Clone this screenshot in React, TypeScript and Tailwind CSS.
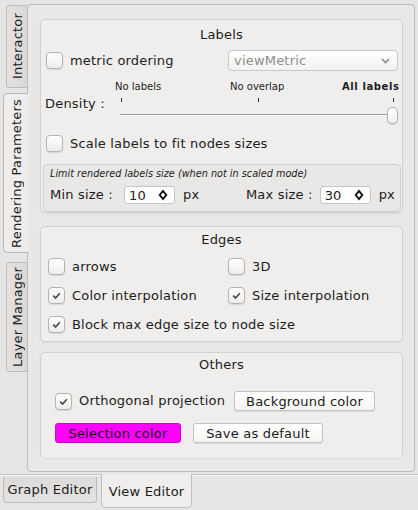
function Check({ on }: { on?: boolean }) {
  return (
    <span className="flex h-[17px] w-[17px] shrink-0 items-center justify-center rounded-[4px] border border-[#b4b3b2] bg-linear-to-b from-white to-[#eeedec] shadow-[0_1px_1px_rgba(0,0,0,0.1)]">
      {on && (
        <svg width="11" height="11" viewBox="0 0 11 11">
          <path d="M2.2 5.6 L4.6 8 L8.8 3.2" stroke="#4b4b4b" strokeWidth="1.7" fill="none" />
        </svg>
      )}
    </span>
  );
}

function SpinArrows() {
  return (
    <svg width="10" height="12" viewBox="0 0 10 12">
      <path d="M5 0.5 L9.5 6 L5 11.5 L0.5 6 Z" fill="#111" />
      <path d="M5 3.6 L7.2 6 L5 8.4 L2.8 6 Z" fill="#fff" />
    </svg>
  );
}

function Spin({ value }: { value: string }) {
  return (
    <div className="flex h-[18px] w-[51px] items-center justify-between rounded-[3px] border border-[#c6c5c4] bg-white pl-[4px] pr-[6px] text-[13px] leading-none">
      <span>{value}</span>
      <SpinArrows />
    </div>
  );
}

function SideTab({
  label,
  active,
  className,
}: {
  label: string;
  active?: boolean;
  className: string;
}) {
  return (
    <div
      className={
        active
          ? "relative z-10 -mr-[1px] flex items-center justify-center rounded-l-[5px] border border-r-0 border-[#b9b8b7] bg-[#eeedec] " +
            className
          : "flex items-center justify-center rounded-l-[4px] border border-r-0 border-[#bebdbc] bg-linear-to-r from-[#e4e3e2] to-[#d9d8d7] " +
            className
      }
    >
      <span className="rotate-180 whitespace-nowrap text-[13px] leading-none [writing-mode:vertical-rl]">
        {label}
      </span>
    </div>
  );
}

function Group({ className, children }: { className: string; children: React.ReactNode }) {
  return (
    <div
      className={
        "w-[363px] rounded-[5px] border border-[#d2d1d0] bg-[#efeeed] shadow-[0_1px_2px_rgba(0,0,0,0.06)] " +
        className
      }
    >
      {children}
    </div>
  );
}

export default function App() {
  return (
    <div className="flex h-[510px] w-[418px] flex-col overflow-hidden bg-[#e6e5e4] font-['DejaVu_Sans',sans-serif] text-[13px] tracking-[0.2px] text-[#1c1c1c]">
      <div className="flex pt-[4px]">
        {/* vertical tabs */}
        <div className="flex w-[27px] shrink-0 flex-col items-end">
          <SideTab label="Interactor" className="mt-[1px] h-[83px] w-[21px]" />
          <SideTab label="Rendering Parameters" active className="mt-[5px] h-[160px] w-[25px]" />
          <SideTab label="Layer Manager" className="mt-[9px] h-[110px] w-[21px]" />
        </div>

        <div className="h-[468px] w-[388px] rounded-[4px] border border-[#bdbcbb] bg-[#e9e8e7] pl-[12px] pt-[14px]">
          {/* Labels */}
          <Group className="h-[194px]">
            <div className="pt-[7px] text-center leading-[16px]">Labels</div>
            <div className="mt-[7px] flex h-[21px] items-center">
              <span className="ml-[5px]">
                <Check />
              </span>
              <span className="ml-[7px]">metric ordering</span>
              <div className="ml-auto mr-[4px] flex h-[21px] w-[170px] items-center justify-between rounded-[4px] border border-[#c9c8c7] bg-linear-to-b from-white to-[#f3f2f1] pl-[5px] pr-[7px] text-[#8e8d8c]">
                <span>viewMetric</span>
                <svg width="9" height="6" viewBox="0 0 9 6">
                  <path d="M1 1 L4.5 4.5 L8 1" stroke="#8a8988" strokeWidth="1.6" fill="none" />
                </svg>
              </div>
            </div>

            <div className="mt-[10px] flex pl-[74px] text-[10px] leading-[11px] tracking-normal">
              <span className="w-[115px]">No labels</span>
              <span className="w-[112px]">No overlap</span>
              <span className="font-bold tracking-[0.6px]">All labels</span>
            </div>

            <div className="mt-[4px] flex h-[29px] items-start">
              <span className="ml-[4px] w-[75px] leading-[16px]">Density :</span>
              <div className="relative h-[29px] w-[279px]">
                <span className="absolute left-[1px] top-[2px] h-[4px] w-[1px] bg-[#333]" />
                <span className="absolute left-[138px] top-[2px] h-[4px] w-[1px] bg-[#333]" />
                <span className="absolute left-[273px] top-[2px] h-[4px] w-[1px] bg-[#333]" />
                <span className="absolute left-0 top-[18px] h-[1px] w-[275px] bg-[#9d9c9b]" />
                <span className="absolute left-0 top-[19px] h-[1px] w-[275px] bg-[#fbfbfb]" />
                <span className="absolute left-[267px] top-[11px] h-[17px] w-[11px] rounded-[5px] border border-[#b1b0af] bg-linear-to-b from-white to-[#f0efee] shadow-[0_1px_1px_rgba(0,0,0,0.15)]" />
              </div>
            </div>

            <div className="mt-[10px] flex h-[17px] items-center">
              <span className="ml-[5px]">
                <Check />
              </span>
              <span className="ml-[7px]">Scale labels to fit nodes sizes</span>
            </div>

            <div className="ml-[2px] mt-[12px] h-[48px] w-[358px] rounded-[4px] border border-[#d0cfce] bg-[#e9e8e7] pl-[6px] pr-[5px] pt-[3px]">
              <div className="text-[9.7px] italic leading-[12px] tracking-normal">
                Limit rendered labels size (when not in scaled mode)
              </div>
              <div className="mt-[6px] flex h-[18px] items-center">
                <span className="w-[74px]">Min size :</span>
                <Spin value="10" />
                <span className="ml-[8px]">px</span>
                <span className="ml-auto">Max size :</span>
                <span className="ml-[7px]">
                  <Spin value="30" />
                </span>
                <span className="ml-[8px]">px</span>
              </div>
            </div>
          </Group>

          {/* Edges */}
          <Group className="mt-[13px] h-[116px]">
            <div className="pt-[5px] text-center leading-[16px]">Edges</div>
            <div className="mt-[10px] flex flex-col gap-[12px] pl-[7px]">
              <div className="flex h-[17px] items-center">
                <div className="flex w-[180px] items-center">
                  <Check />
                  <span className="ml-[7px]">arrows</span>
                </div>
                <Check />
                <span className="ml-[7px]">3D</span>
              </div>
              <div className="flex h-[17px] items-center">
                <div className="flex w-[180px] items-center">
                  <Check on />
                  <span className="ml-[7px]">Color interpolation</span>
                </div>
                <Check on />
                <span className="ml-[7px]">Size interpolation</span>
              </div>
              <div className="flex h-[17px] items-center">
                <Check on />
                <span className="ml-[7px]">Block max edge size to node size</span>
              </div>
            </div>
          </Group>

          {/* Others */}
          <Group className="mt-[10px] h-[106px] border-b-[#ebeae9]">
            <div className="pt-[4px] text-center leading-[16px]">Others</div>
            <div className="ml-[14px] mt-[18px] flex h-[20px] items-center">
              <Check on />
              <span className="ml-[7px] w-[155px]">Orthogonal projection</span>
              <button className="h-[20px] w-[141px] rounded-[3px] border border-[#c3c2c1] bg-linear-to-b from-white to-[#f6f5f4] leading-none shadow-[0_1px_1px_rgba(0,0,0,0.08)]">
                Background color
              </button>
            </div>
            <div className="ml-[14px] mt-[12px] flex h-[20px] items-center gap-[12px]">
              <button className="h-[20px] w-[126px] rounded-[3px] border border-[#d400d4] bg-[#ff00ff] leading-none text-[#111]">
                Selection color
              </button>
              <button className="h-[20px] w-[130px] rounded-[3px] border border-[#c3c2c1] bg-linear-to-b from-white to-[#f6f5f4] leading-none shadow-[0_1px_1px_rgba(0,0,0,0.08)]">
                Save as default
              </button>
            </div>
          </Group>
        </div>
      </div>

      {/* bottom tabs */}
      <div className="mt-[2px] flex items-start border-t border-[#c4c3c2] pl-[3px] shadow-[inset_0_1px_0_#f7f7f7]">
        <div className="mt-[2px] flex h-[26px] w-[94px] items-center justify-center rounded-b-[4px] border border-t-0 border-[#bdbcbb] bg-linear-to-b from-[#dcdbda] to-[#e4e3e2] leading-none">
          Graph Editor
        </div>
        <div className="-mt-[1px] ml-[4px] flex h-[34px] w-[91px] items-center justify-center rounded-b-[5px] border border-t-0 border-[#bebdbc] bg-[#efeeed] pt-[2px] leading-none">
          View Editor
        </div>
      </div>
    </div>
  );
}
